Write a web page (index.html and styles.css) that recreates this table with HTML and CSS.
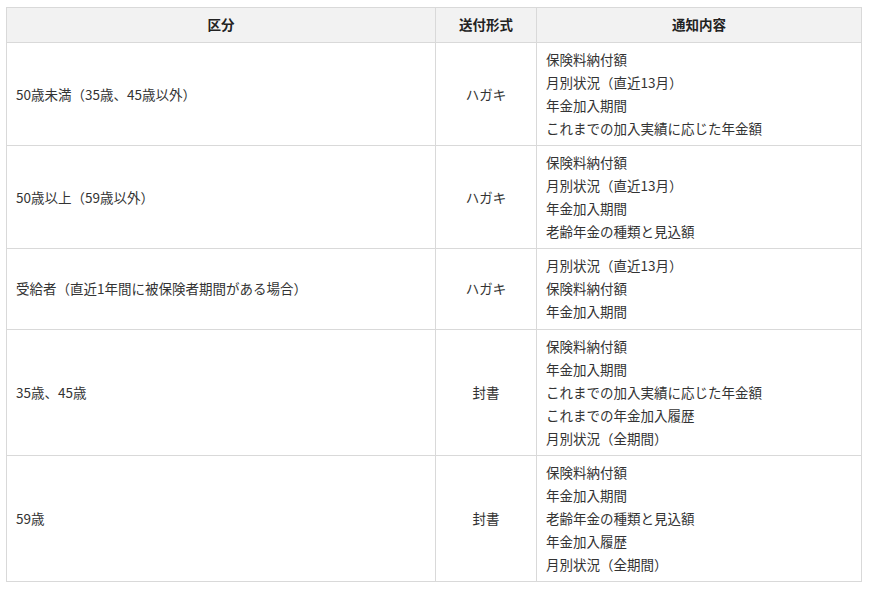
FILE: index.html
```html
<!DOCTYPE html>
<html lang="ja">
<head>
<meta charset="utf-8">
<link rel="stylesheet" href="styles.css">
</head>
<body>
<table class="tbl">
  <colgroup>
    <col class="c1"><col class="c2"><col class="c3">
  </colgroup>
  <thead>
    <tr><th>区分</th><th>送付形式</th><th>通知内容</th></tr>
  </thead>
  <tbody>
    <tr>
      <td>50歳未満（35歳、45歳以外）</td>
      <td class="center">ハガキ</td>
      <td>保険料納付額<br>月別状況（直近13月）<br>年金加入期間<br>これまでの加入実績に応じた年金額</td>
    </tr>
    <tr>
      <td>50歳以上（59歳以外）</td>
      <td class="center">ハガキ</td>
      <td>保険料納付額<br>月別状況（直近13月）<br>年金加入期間<br>老齢年金の種類と見込額</td>
    </tr>
    <tr class="short">
      <td>受給者（直近1年間に被保険者期間がある場合）</td>
      <td class="center">ハガキ</td>
      <td>月別状況（直近13月）<br>保険料納付額<br>年金加入期間</td>
    </tr>
    <tr>
      <td>35歳、45歳</td>
      <td class="center">封書</td>
      <td>保険料納付額<br>年金加入期間<br>これまでの加入実績に応じた年金額<br>これまでの年金加入履歴<br>月別状況（全期間）</td>
    </tr>
    <tr>
      <td>59歳</td>
      <td class="center">封書</td>
      <td>保険料納付額<br>年金加入期間<br>老齢年金の種類と見込額<br>年金加入履歴<br>月別状況（全期間）</td>
    </tr>
  </tbody>
</table>
</body>
</html>
```
FILE: styles.css
```css
html, body {
  margin: 0;
  padding: 0;
  background: #ffffff;
}
body {
  padding: 7px 0 0 6px;
  font-family: "Noto Sans CJK JP", "Noto Sans", sans-serif;
  font-size: 13.5px;
  color: #333333;
}
.tbl {
  border-collapse: collapse;
  table-layout: fixed;
  width: 855px;
}
.c1 { width: 429px; }
.c2 { width: 101px; }
.c3 { width: 325px; }
.tbl th, .tbl td {
  border: 1px solid #d9d9d9;
  line-height: 23px;
  padding: 5px 9px;
  vertical-align: middle;
  text-align: left;
}
.tbl th {
  background: #f2f2f2;
  font-weight: bold;
  text-align: center;
  color: #222222;
  padding: 5px 9px 6px;
}
.tbl tr.short td {
  padding-bottom: 6px;
}
.tbl td.center {
  text-align: center;
}
```
